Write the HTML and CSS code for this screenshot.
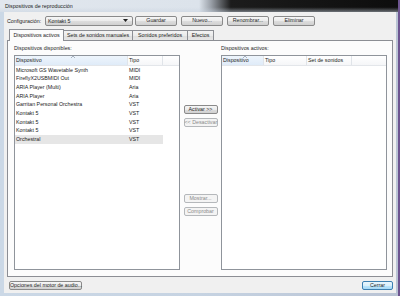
FILE: index.html
```html
<!DOCTYPE html>
<html lang="es">

<head>
    <meta charset="UTF-8">
    <title>Dispositivos de reproducción</title>
    <link rel="stylesheet" href="styles.css">
</head>

<body>
    <div class="window">
        <div class="titlebar">
            <span class="title">Dispositivos de reproducción</span>
        </div>

        <div class="client">
            <!-- fila de configuración -->
            <div class="config-row">
                <span class="config-label">Configuración:</span>
                <div class="combo">
                    <span>Kontakt 5</span>
                    <svg class="combo-arrow" width="5" height="3" viewBox="0 0 5 3"><path d="M0 0H5L2.5 3Z" fill="#222"/></svg>
                </div>
                <button class="btn btn-top">Guardar</button>
                <button class="btn btn-top">Nuevo...</button>
                <button class="btn btn-top">Renombrar...</button>
                <button class="btn btn-top">Eliminar</button>
            </div>

            <!-- pestañas -->
            <div class="tabs">
                <div class="tab tab-active">Dispositivos activos</div>
                <div class="tab tab-sets">Sets de sonidos manuales</div>
                <div class="tab tab-pref">Sonidos preferidos</div>
                <div class="tab tab-fx">Efectos</div>
            </div>

            <div class="panel">
                <div class="col">
                    <div class="group-label">Dispositivos disponibles:</div>
                    <div class="listbox">
                        <div class="list-head">
                            <div class="head-cell sorted c-dev">Dispositivo<svg class="sort" width="4" height="2" viewBox="0 0 4 2"><path d="M0 2L2 0L4 2" fill="none" stroke="#8a97a8" stroke-width="0.7"/></svg></div>
                            <div class="head-cell c-type">Tipo</div>
                            <div class="head-cell c-fill"></div>
                        </div>
                        <div class="row"><span class="c-dev">Microsoft GS Wavetable Synth</span><span class="c-type">MIDI</span></div>
                        <div class="row"><span class="c-dev">FireflyX2USBMIDI Out</span><span class="c-type">MIDI</span></div>
                        <div class="row"><span class="c-dev">ARIA Player (Multi)</span><span class="c-type">Aria</span></div>
                        <div class="row"><span class="c-dev">ARIA Player</span><span class="c-type">Aria</span></div>
                        <div class="row"><span class="c-dev">Garritan Personal Orchestra</span><span class="c-type">VST</span></div>
                        <div class="row"><span class="c-dev">Kontakt 5</span><span class="c-type">VST</span></div>
                        <div class="row"><span class="c-dev">Kontakt 5</span><span class="c-type">VST</span></div>
                        <div class="row"><span class="c-dev">Kontakt 5</span><span class="c-type">VST</span></div>
                        <div class="row row-selected"><span class="c-dev">Orchestral</span><span class="c-type">VST</span></div>
                    </div>
                </div>

                <div class="middle">
                    <button class="btn btn-mid btn-activar">Activar &gt;&gt;</button>
                    <button class="btn btn-mid" disabled>&lt;&lt; Desactivar</button>
                    <button class="btn btn-mid btn-mostrar" disabled>Mostrar...</button>
                    <button class="btn btn-mid" disabled>Comprobar</button>
                </div>

                <div class="col">
                    <div class="group-label">Dispositivos activos:</div>
                    <div class="listbox">
                        <div class="list-head">
                            <div class="head-cell sorted r-dev">Dispositivo<svg class="sort" width="4" height="2" viewBox="0 0 4 2"><path d="M0 2L2 0L4 2" fill="none" stroke="#8a97a8" stroke-width="0.7"/></svg></div>
                            <div class="head-cell r-type">Tipo</div>
                            <div class="head-cell r-set">Set de sonidos</div>
                            <div class="head-cell c-fill"></div>
                        </div>
                    </div>
                </div>
            </div>

            <div class="footer">
                <button class="btn btn-options">Opciones del motor de audio...</button>
                <button class="btn btn-default">Cerrar</button>
            </div>
        </div>
    </div>
</body>

</html>
```

FILE: styles.css
```css
* {
    box-sizing: border-box;
}

body {
    margin: 0;
    width: 400px;
    height: 296px;
    overflow: hidden;
    font-family: "Liberation Sans", Arial, sans-serif;
    font-size: 5.3px;
    color: #222;
    background: #2b2b36;
}

/* ventana */
.window {
    display: flex;
    flex-direction: column;
    width: 400px;
    height: 296px;
    background: linear-gradient(to right, #cbd8e6 0%, #c6d3e2 50%, #b9c3d4 100%);
    border-right: 2px solid #6d5590;
}

.titlebar {
    height: 13px;
    padding-left: 5px;
    display: flex;
    align-items: center;
    background:
        linear-gradient(to bottom, rgba(0, 0, 0, 0) 60%, rgba(200, 210, 222, 0.5) 100%),
        linear-gradient(to right, #e1e7ee 0%, #dce3eb 50%, #9aa0a8 53%, #1c1c1c 58%, #0d0d0d 100%);
}

.title {
    color: #1a1a1a;
}

.client {
    flex: 1;
    margin: 0 2px 3px 4px;
    padding: 3px 3px 3px 3px;
    background: #f0f0f0;
    display: flex;
    flex-direction: column;
}

/* botones estilo Windows 7 */
.btn {
    font: inherit;
    color: #1f1f1f;
    height: 9px;
    padding: 0;
    line-height: 7px;
    white-space: nowrap;
    overflow: visible;
    border: 1px solid #8a8a8a;
    border-radius: 2px;
    background: linear-gradient(to bottom, #f6f6f6 0%, #ebebeb 50%, #dddddd 51%, #d0d0d0 100%);
}

.btn:disabled {
    color: #8b8b8b;
    border-color: #b5b8bb;
    background: #f4f4f4;
}

.config-row {
    display: flex;
    align-items: center;
    height: 11px;
}

.config-label {
    width: 38px;
}

.combo {
    width: 88px;
    height: 10px;
    display: flex;
    align-items: center;
    justify-content: space-between;
    padding: 0 4px 0 2px;
    border: 1px solid #8a8a8a;
    border-radius: 2px;
    background: linear-gradient(to bottom, #f6f6f6 0%, #ebebeb 50%, #dddddd 51%, #d0d0d0 100%);
}

.btn-top {
    width: 42px;
    height: 10px;
    margin-left: 4px;
}

.btn-top:first-of-type {
    margin-left: 2px;
}

/* pestañas */
.tabs {
    display: flex;
    align-items: flex-end;
    height: 13px;
    padding-left: 3px;
    margin-top: 1px;
    position: relative;
    z-index: 1;
}

.tab {
    height: 10px;
    line-height: 9px;
    text-align: center;
    white-space: nowrap;
    border: 1px solid #8c8e94;
    border-bottom: none;
    margin-left: -1px;
    background: linear-gradient(to bottom, #f3f3f3 0%, #ebebeb 50%, #dedede 51%, #e6e6e6 100%);
}

.tab-active {
    height: 12px;
    width: 55px;
    margin-bottom: -1px;
    line-height: 11px;
    background: #fcfcfc;
}

.tab-sets {
    width: 70px;
}

.tab-pref {
    width: 56px;
}

.tab-fx {
    width: 27px;
}

.panel {
    height: 237px;
    border: 1px solid #8c8e94;
    background: #fcfcfc;
    display: flex;
    padding: 4px 5px 6px 6px;
}

.col {
    width: 166px;
    display: flex;
    flex-direction: column;
}

.group-label {
    height: 10px;
    line-height: 7px;
}

.listbox {
    flex: 1;
    border: 1px solid #8f949b;
    background: #fff;
}

.list-head {
    display: flex;
    height: 9.5px;
    line-height: 9px;
    border-bottom: 1px solid #e3e6ea;
}

.head-cell {
    position: relative;
    padding-left: 1px;
    white-space: nowrap;
    border-right: 1px solid #e0e4e9;
    background: linear-gradient(to bottom, #ffffff, #f5f6f8);
}

.head-cell.sorted {
    background: linear-gradient(to bottom, #eef5fc, #dfebf8);
}

.sort {
    position: absolute;
    top: 0;
    left: 50%;
}

.c-dev {
    width: 113px;
}

.c-type {
    width: 35px;
}

.c-fill {
    flex: 1;
    border-right: none;
}

.r-dev {
    width: 42px;
}

.r-type {
    width: 43px;
}

.r-set {
    width: 45px;
}

.row {
    display: flex;
    height: 8.7px;
    line-height: 8.7px;
    width: 148px;
    white-space: nowrap;
}

.row span {
    padding-left: 1px;
}

.row-selected {
    background: #e6e6e6;
}

/* botones centrales */
.middle {
    width: 41px;
    display: flex;
    flex-direction: column;
    align-items: center;
    padding-top: 60px;
}

.btn-mid {
    width: 34px;
    height: 9px;
    margin-bottom: 4px;
}

.btn-mostrar {
    margin-top: 63px;
}

/* pie */
.footer {
    display: flex;
    justify-content: space-between;
    align-items: center;
    margin-top: 4px;
    padding-left: 2px;
}

.btn-options {
    width: 73px;
}

.btn-default {
    width: 31px;
    border-color: #3c7fb1;
    background: linear-gradient(to bottom, #eaf6fd 0%, #d9f0fc 50%, #bee6fd 51%, #a7d9f5 100%);
}
```
